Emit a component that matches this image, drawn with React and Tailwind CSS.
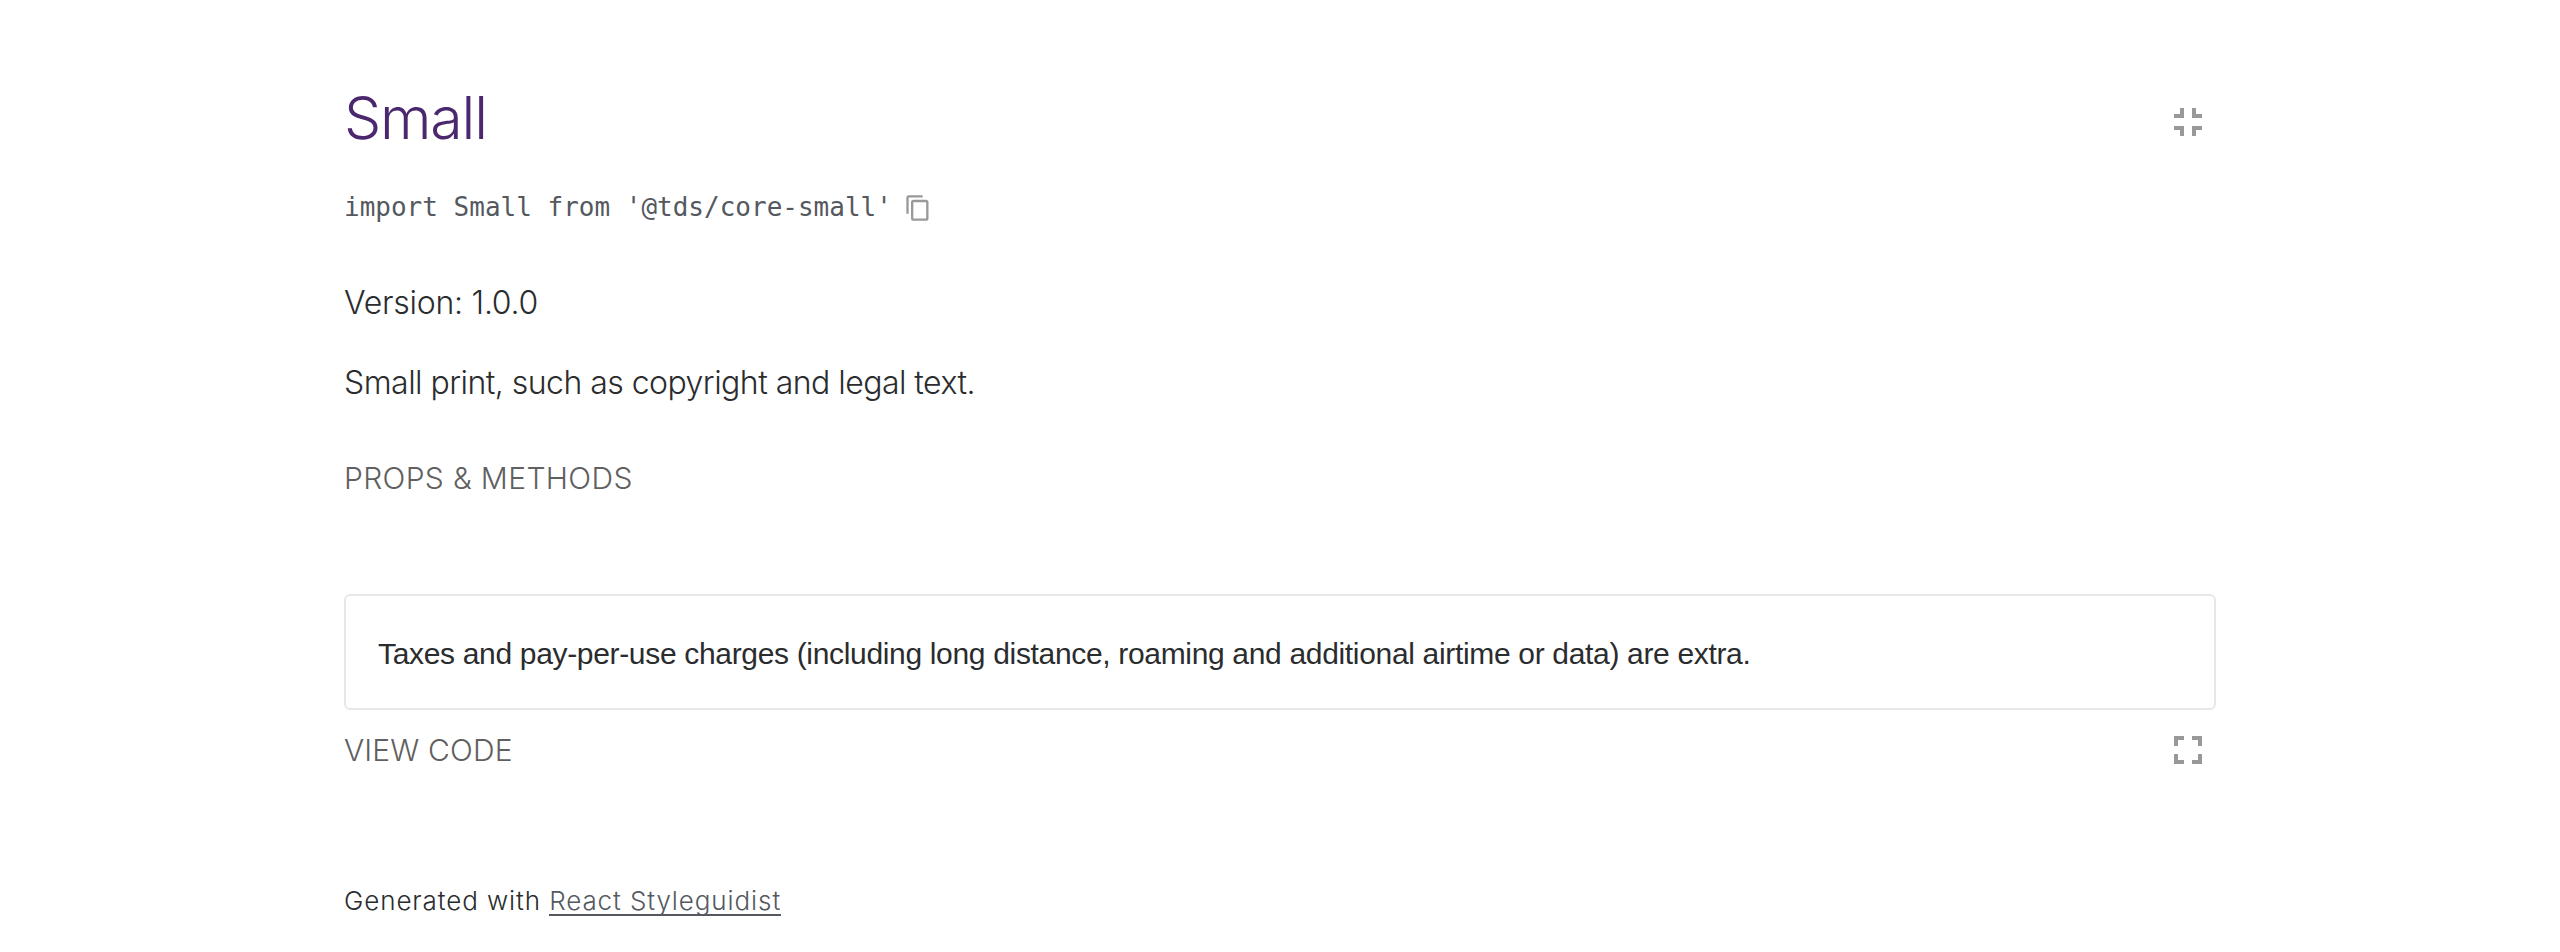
import React from 'react';

const ICON = 'block shrink-0 fill-[#999]';

function ExitFullscreenIcon() {
  return (
    <svg className={`${ICON} size-12`} viewBox="0 0 24 24" aria-hidden="true">
      <path d="M5 16h3v3h2v-5H5v2zm3-8H5v2h5V5H8v3zm6 11h2v-3h3v-2h-5v5zm2-11V5h-2v5h5V8h-3z" />
    </svg>
  );
}

function FullscreenIcon() {
  return (
    <svg className={`${ICON} size-12`} viewBox="0 0 24 24" aria-hidden="true">
      <path d="M7 14H5v5h5v-2H7v-3zm-2-4h2V7h3V5H5v5zm12 7h-3v2h5v-5h-2v3zM14 5v2h3v3h2V5h-5z" />
    </svg>
  );
}

function CopyIcon() {
  return (
    <svg className={`${ICON} size-7`} viewBox="0 0 24 24" aria-hidden="true">
      <path d="M16 1H4c-1.1 0-2 .9-2 2v14h2V3h12V1zm3 4H8c-1.1 0-2 .9-2 2v14c0 1.1.9 2 2 2h11c1.1 0 2-.9 2-2V7c0-1.1-.9-2-2-2zm0 16H8V7h11v14z" />
    </svg>
  );
}

export default function App() {
  return (
    <div className="flex h-[952px] justify-center bg-white font-['Inter','Liberation_Sans',sans-serif] font-light text-[#2a2c2e]">
      <main className="flex w-[1872px] flex-col pt-[82px]">
        <header className="flex h-20 items-center justify-between pr-1">
          <h1 className="self-start text-[59px] leading-[71px] tracking-[-1.2px] text-[#4b286d]">Small</h1>
          <ExitFullscreenIcon />
        </header>
        <div className="mt-6 flex h-11 items-center gap-3">
          <code className="pb-px font-['DejaVu_Sans_Mono',monospace] text-[26px] leading-[43px] font-normal text-[#54595f]">
            import Small from '@tds/core-small'
          </code>
          <CopyIcon />
        </div>
        <p className="mt-[48px] text-[32px] leading-[50px] tracking-[-0.25px]">Version: 1.0.0</p>
        <p className="mt-[30px] text-[32px] leading-[50px] tracking-[-0.53px]">Small print, such as copyright and legal text.</p>
        <button className="mt-[48px] self-start text-[30px] leading-[44px] tracking-[0.35px] text-[#606060]">PROPS &amp; METHODS</button>
        <section className="mt-[94px] flex h-[116px] items-center rounded-[6px] border-2 border-[#e8e8e8] px-8 pt-1">
          <small className="font-['Liberation_Sans',sans-serif] text-[30px] leading-[42px] font-normal tracking-[-0.33px]">
            Taxes and pay-per-use charges (including long distance, roaming and additional airtime or data) are extra.
          </small>
        </section>
        <div className="mt-4 flex h-12 items-center justify-between pr-1">
          <button className="text-[30px] leading-[44px] tracking-[0.15px] text-[#606060]">VIEW CODE</button>
          <FullscreenIcon />
        </div>
        <footer className="mt-[107px] text-[26px] leading-[40px] tracking-[0.9px]">
          Generated with{' '}
          <a className="inline-block bg-[linear-gradient(#54595f,#54595f)] bg-[length:100%_2px] bg-[position:0_33px] bg-no-repeat text-[#54595f]">React Styleguidist</a>
        </footer>
      </main>
    </div>
  );
}
